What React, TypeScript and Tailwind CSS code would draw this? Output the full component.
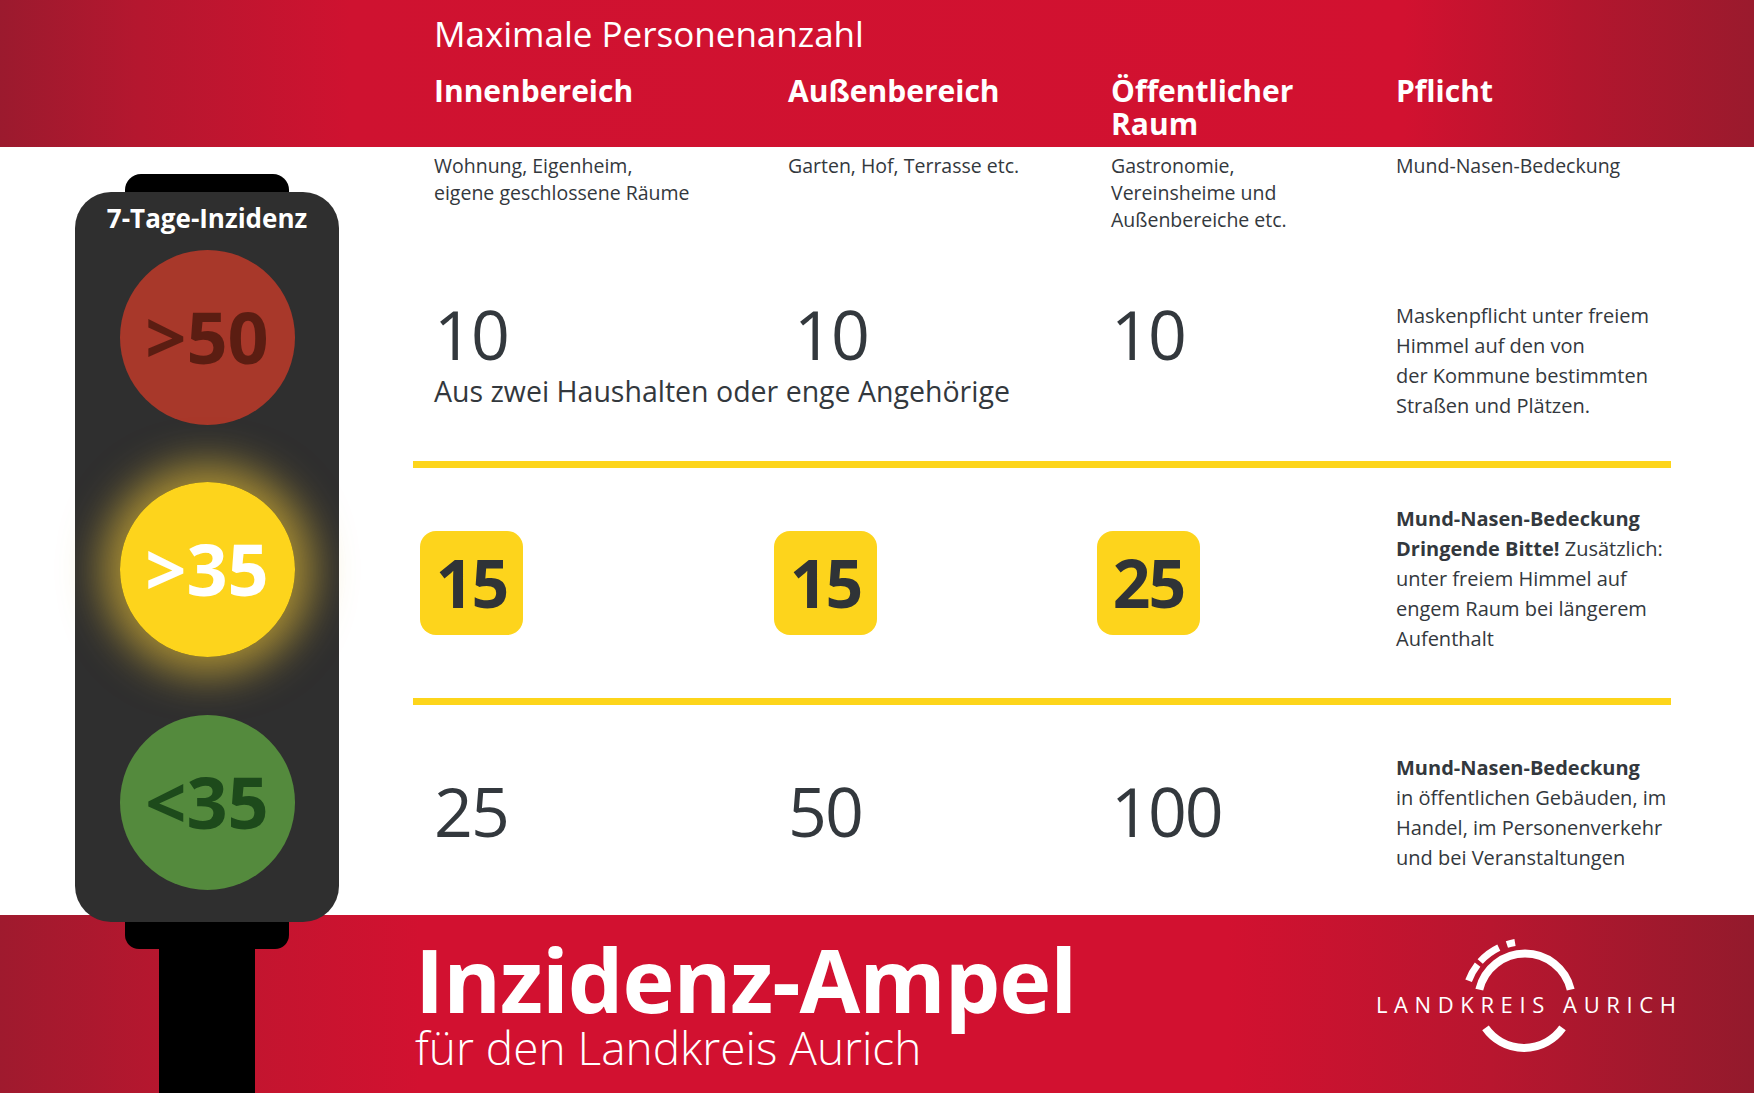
const cols = "grid grid-cols-[354px_323px_285px]";

function Lamp({
  label,
  className,
}: {
  label: string;
  className: string;
}) {
  return (
    <div
      className={`flex h-[175px] w-[175px] items-center justify-center rounded-full pb-[3px] text-[72px] font-bold leading-none ${className}`}
    >
      {label}
    </div>
  );
}

function Badge({ value }: { value: string }) {
  return (
    <div className="-ml-[14px] flex h-[104px] w-[103px] items-center justify-center rounded-[16px] bg-[#fdd41c] pb-[2px] text-[66px] font-bold leading-none tracking-[-2px] text-[#2f3337]">
      {value}
    </div>
  );
}

function Logo() {
  return (
    <div className="relative ml-auto mr-[68px] mt-[20px] h-[130px] w-[310px]">
      <svg
        className="absolute inset-0"
        width="310"
        height="130"
        viewBox="0 0 310 130"
        fill="none"
        stroke="white"
      >
        {/* Ring oben */}
        <path d="M103.3 54.6 A47 47 0 0 1 194.7 54.6" strokeWidth="8" />
        {/* Ring unten */}
        <path d="M186.5 92.9 A47 47 0 0 1 109.5 92.9" strokeWidth="8" />
        {/* äußere Striche */}
        <path d="M139 7.5 A59 59 0 0 0 130.9 9.5" strokeWidth="7" />
        <path d="M122.8 12.6 A59 59 0 0 0 104.2 26.5" strokeWidth="7" />
        <path d="M101.6 29.7 A59 59 0 0 0 92.6 45.8" strokeWidth="7" />
      </svg>
      <div className="relative pt-[58px] text-[22px] leading-[22px] tracking-[0.3em] text-white">
        LANDKREIS AURICH
      </div>
    </div>
  );
}

function TrafficLight() {
  return (
    <div className="absolute left-[75px] top-[174px] w-[264px]">
      <div className="mx-auto h-[18px] w-[164px] rounded-t-[16px] bg-black" />
      <div className="flex h-[730px] flex-col items-center rounded-[36px] bg-[#2f2f2f] pt-[11px]">
        <div className="text-[26px] font-bold leading-[30px] text-white">7-Tage-Inzidenz</div>
        <div className="mt-[17px]">
          <Lamp label=">50" className="bg-[#a8382a] text-[#5b1d12]" />
        </div>
        <div className="mt-[57px] rounded-full shadow-[0_0_40px_18px_rgba(212,176,52,0.72)]">
          <Lamp label=">35" className="bg-[#fdd41c] text-white" />
        </div>
        <div className="mt-[58px]">
          <Lamp label="<35" className="bg-[#548a3d] text-[#1d4a1b]" />
        </div>
      </div>
      <div className="mx-auto h-[27px] w-[164px] rounded-b-[14px] bg-black" />
      <div className="mx-auto h-[144px] w-[96px] bg-black" />
    </div>
  );
}

export default function App() {
  return (
    <div className="relative h-[1093px] w-[1754px] overflow-hidden bg-white font-['Open_Sans','Noto_Sans',sans-serif] text-[#33383d]">
      {/* Kopfband */}
      <header className="h-[147px] bg-[linear-gradient(to_right,#9b1a2e_0%,#b5172f_8%,#cf1230_20%,#d21130_80%,#b3162e_90%,#9a1a2d_100%)] pl-[434px] pt-[14px] text-white">
        <h2 className="text-[35px] font-normal leading-[40px]">Maximale Personenanzahl</h2>
        <div className="mt-[20px] grid grid-cols-[354px_323px_285px_1fr] text-[30px] font-bold leading-[33px]">
          <div>Innenbereich</div>
          <div>Außenbereich</div>
          <div>
            Öffentlicher
            <br />
            Raum
          </div>
          <div>Pflicht</div>
        </div>
      </header>

      <main className="ml-[413px] h-[768px] w-[1258px]">
        {/* Beschreibung */}
        <div className="grid h-[86px] grid-cols-[354px_323px_285px_1fr] pl-[21px] pt-[5px] text-[19.5px] leading-[27px]">
          <div>
            Wohnung, Eigenheim,
            <br />
            eigene geschlossene Räume
          </div>
          <div>Garten, Hof, Terrasse etc.</div>
          <div>
            Gastronomie,
            <br />
            Vereinsheime und
            <br />
            Außenbereiche etc.
          </div>
          <div>Mund-Nasen-Bedeckung</div>
        </div>

        {/* >50 */}
        <div className="flex h-[228px] pl-[21px]">
          <div className="w-[962px] pt-[67px]">
            <div className={`${cols} text-[68px] leading-[68px] tracking-[-2px]`}>
              <span>10</span>
              <span className="pl-[6px]">10</span>
              <span>10</span>
            </div>
            <p className="mt-[6px] text-[28.5px] leading-[34px]">
              Aus zwei Haushalten oder enge Angehörige
            </p>
          </div>
          <div className="whitespace-nowrap pt-[68px] text-[20px] leading-[30px]">
            Maskenpflicht unter freiem
            <br />
            Himmel auf den von
            <br />
            der Kommune bestimmten
            <br />
            Straßen und Plätzen.
          </div>
        </div>
        <div className="h-[7px] bg-[#fdd51b]" />

        {/* >35 */}
        <div className="flex h-[230px] items-center pl-[21px]">
          <div className={`${cols} w-[962px]`}>
            <Badge value="15" />
            <Badge value="15" />
            <Badge value="25" />
          </div>
          <div className="mb-[9px] whitespace-nowrap text-[20px] leading-[30px]">
            <b>Mund-Nasen-Bedeckung</b>
            <br />
            <b>Dringende Bitte!</b> Zusätzlich:
            <br />
            unter freiem Himmel auf
            <br />
            engem Raum bei längerem
            <br />
            Aufenthalt
          </div>
        </div>
        <div className="h-[7px] bg-[#fdd51b]" />

        {/* <35 */}
        <div className="flex h-[210px] pl-[21px]">
          <div className={`${cols} w-[962px] pt-[72px] text-[68px] leading-[68px] tracking-[-2px]`}>
            <span>25</span>
            <span>50</span>
            <span>100</span>
          </div>
          <div className="whitespace-nowrap pt-[48px] text-[20px] leading-[30px]">
            <b>Mund-Nasen-Bedeckung</b>
            <br />
            in öffentlichen Gebäuden, im
            <br />
            Handel, im Personenverkehr
            <br />
            und bei Veranstaltungen
          </div>
        </div>
      </main>

      {/* Fußband */}
      <footer className="flex h-[178px] bg-[linear-gradient(to_right,#9f1a2e_0%,#c2152f_14%,#d21130_24%,#d21130_70%,#b8162f_85%,#931a2c_100%)] text-white">
        <div className="pl-[415px] pt-[20px]">
          <h1 className="whitespace-nowrap text-[88px] font-bold leading-[88px] tracking-[-1px]">
            Inzidenz-Ampel
          </h1>
          <p className="mt-[1px] whitespace-nowrap text-[46px] font-light leading-[46px]">
            für den Landkreis Aurich
          </p>
        </div>
        <Logo />
      </footer>

      <TrafficLight />
    </div>
  );
}
